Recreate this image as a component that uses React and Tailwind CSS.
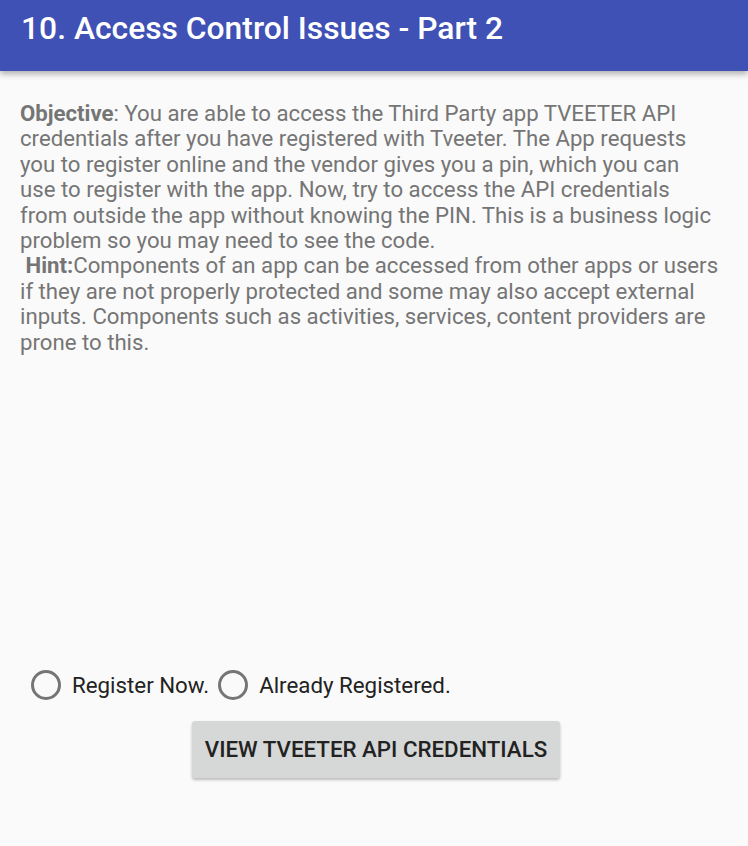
import { useState } from "react";

const objectiveLines = [
  "credentials after you have registered with Tveeter. The App requests",
  "you to register online and the vendor gives you a pin, which you can",
  "use to register with the app. Now, try to access the API credentials",
  "from outside the app without knowing the PIN. This is a business logic",
  "problem so you may need to see the code.",
];

const hintLines = [
  "if they are not properly protected and some may also accept external",
  "inputs. Components such as activities, services, content providers are",
  "prone to this.",
];

function Radio({ label, checked, onClick }) {
  return (
    <button type="button" onClick={onClick} className="flex items-center">
      <span className="flex h-[30px] w-[30px] items-center justify-center rounded-full border-[3px] border-[#757575]">
        {checked && <span className="h-[14px] w-[14px] rounded-full bg-[#ff4081]" />}
      </span>
      <span className="ml-[11px] text-[22.3px] leading-none text-[#222222]">{label}</span>
    </button>
  );
}

export default function App() {
  const [choice, setChoice] = useState(null);

  return (
    <div className="flex min-h-[846px] flex-col bg-[#fafafa] font-['Roboto',sans-serif]">
      {/* toolbar */}
      <header className="relative z-10 flex h-[71px] items-start bg-[#3f51b5] px-[21px] pt-[10px] shadow-[0_3px_6px_rgba(0,0,0,0.3)]">
        <h1 className="text-[31.8px] leading-[36px] font-medium text-white">10. Access Control Issues - Part 2</h1>
      </header>

      <main className="flex flex-1 flex-col px-[20px] pt-[30px]">
        {/* android breaks lines its own way, so the lines are fixed here */}
        <div className="whitespace-nowrap text-[22.2px] leading-[25.4px] text-[#757575]">
          <div>
            <b className="font-bold">Objective</b>: You are able to access the Third Party app TVEETER API
          </div>
          {objectiveLines.map((line) => (
            <div key={line}>{line}</div>
          ))}
          <div>
            &nbsp;<b className="font-bold">Hint:</b>Components of an app can be accessed from other apps or users
          </div>
          {hintLines.map((line) => (
            <div key={line}>{line}</div>
          ))}
        </div>

        <div className="mt-[315px] flex items-center gap-[9px] pl-[11px]">
          <Radio label="Register Now." checked={choice === 1} onClick={() => setChoice(1)} />
          <Radio label="Already Registered." checked={choice === 2} onClick={() => setChoice(2)} />
        </div>

        <div className="mt-[21px] flex justify-center pl-[4px]">
          <button
            type="button"
            className="h-[57px] w-[368px] rounded-[3px] bg-[#d6d7d7] text-[22.3px] font-medium text-[#222222] shadow-[0_2px_3px_rgba(0,0,0,0.25)]"
          >
            VIEW TVEETER API CREDENTIALS
          </button>
        </div>
      </main>
    </div>
  );
}
